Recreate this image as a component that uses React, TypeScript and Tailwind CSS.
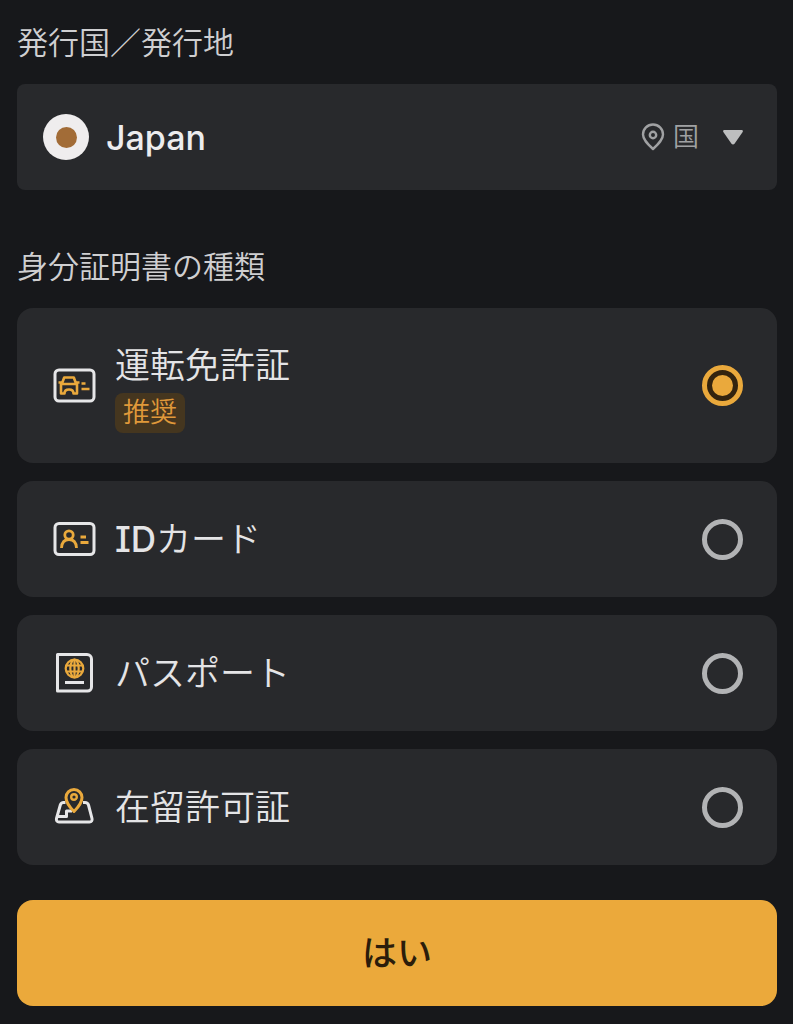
import { ReactNode, useState } from "react";
import clsx from "clsx";

const GOLD = "#eaa93c";
const LINE = "#e6e6e8";

function LicenseIcon() {
  return (
    <svg viewBox="0 0 44 44" fill="none" strokeWidth="3" className="size-11 shrink-0" aria-hidden="true">
      <rect x="2" y="6" width="39" height="31" rx="4" stroke={LINE} />
      <g stroke={GOLD} strokeWidth="2.6" strokeLinejoin="round">
        <path d="M9 19.5 11.200 13.500h9.600L23 19.500" />
        <path d="M8 20h16v9.500h-3.500c0-3-1.500-4-4.500-4s-4.500 1-4.500 4H8z" />
        <path d="M5.500 18.500H9M23 18.500h3.500" />
        <path d="M28.500 19.500h4M28.500 25h8" />
      </g>
    </svg>
  );
}

function IdCardIcon() {
  return (
    <svg viewBox="0 0 44 44" fill="none" strokeWidth="3" className="size-11 shrink-0" aria-hidden="true">
      <rect x="2" y="6.500" width="39" height="31" rx="4" stroke={LINE} />
      <g stroke={GOLD} strokeWidth="2.8">
        <circle cx="16" cy="18" r="4.200" />
        <path d="M8.500 31c.3-5.500 3.300-8.500 7.500-8.500s7.200 3 7.500 8.500" />
        <path d="M27.500 20h5.500M27.500 25.500h8" />
      </g>
    </svg>
  );
}

function PassportIcon() {
  return (
    <svg viewBox="0 0 44 44" fill="none" strokeWidth="3" className="size-11 shrink-0" aria-hidden="true">
      <path d="M4.500 3.500H34a4.500 4.500 0 0 1 4.500 4.500v28a4 4 0 0 1-4 4h-30z" stroke={LINE} strokeLinejoin="round" />
      <path d="M12 31.500h19" stroke={LINE} />
      <g stroke={GOLD} strokeWidth="2.200">
        <circle cx="21.500" cy="17.500" r="8.800" />
        <ellipse cx="21.500" cy="17.500" rx="4.200" ry="8.800" />
        <path d="M21.500 9v17M13.500 14.500h16M13.500 20.500h16" />
      </g>
    </svg>
  );
}

function ResidenceIcon() {
  return (
    <svg viewBox="0 0 44 44" fill="none" strokeWidth="3" className="size-11 shrink-0" aria-hidden="true">
      <g stroke={LINE} strokeLinejoin="round">
        <path d="M12.500 17.500H10.500c-2 0-2.700 1-3.200 2.500L3.500 33.500c-.5 2 .5 3.500 2.500 3.500h30.500c2 0 3-1.500 2.500-3.500L35.500 20c-.5-1.500-1.500-2.500-3.500-2.500h-2" />
        <path d="M4 31.500h9.500V26H19" />
      </g>
      <path d="M21 26.500c-4.500-4.500-8-9-8-14a8 8 0 0 1 16 0c0 5-3.500 9.500-8 14z" stroke={GOLD} strokeLinejoin="round" />
      <circle cx="21" cy="12" r="2.800" stroke={GOLD} strokeWidth="2.400" />
    </svg>
  );
}

function PinIcon() {
  return (
    <svg viewBox="0 0 24 28" fill="none" stroke="#a0a1a3" strokeWidth="2.400" className="h-7 w-6 shrink-0" aria-hidden="true">
      <path d="M12 26C6 20.500 2 16.500 2 11.500a10 10 0 0 1 20 0c0 5-4 9-10 14.500z" strokeLinejoin="round" />
      <circle cx="12" cy="12" r="3.200" />
    </svg>
  );
}

interface DocumentOption {
  id: string;
  label: ReactNode;
  icon: ReactNode;
  recommended?: boolean;
}

const documents: DocumentOption[] = [
  { id: "license", label: "運転免許証", icon: <LicenseIcon />, recommended: true },
  {
    id: "id-card",
    label: (
      <>
        <span className="font-medium [font-feature-settings:'cv08']">ID</span>カード
      </>
    ),
    icon: <IdCardIcon />,
  },
  { id: "passport", label: "パスポート", icon: <PassportIcon /> },
  { id: "residence", label: "在留許可証", icon: <ResidenceIcon /> },
];

interface DocumentCardProps {
  option: DocumentOption;
  checked: boolean;
  onSelect: (id: string) => void;
}

function DocumentCard({ option, checked, onSelect }: DocumentCardProps) {
  return (
    <label className="flex min-h-[116px] cursor-pointer items-center gap-[18px] rounded-2xl bg-[#28292c] py-[30px] pr-[34px] pl-9">
      {option.icon}
      <span className="flex flex-1 flex-col items-start">
        <span className="text-[35px] leading-[55px]">{option.label}</span>
        {option.recommended && (
          <span className="rounded-lg bg-[#45361f] px-2 text-[27px] leading-10 text-[#e0993a]">推奨</span>
        )}
      </span>
      <input
        type="radio"
        name="document"
        value={option.id}
        checked={checked}
        onChange={() => onSelect(option.id)}
        className={clsx(
          "grid size-[41px] shrink-0 appearance-none place-content-center rounded-full border-[5px]",
          checked
            ? "border-[#eaa93c] bg-[#33240f] before:size-[21px] before:rounded-full before:bg-[#eaa93c]"
            : "border-[#b2b3b5]"
        )}
      />
    </label>
  );
}

export default function App() {
  const [selected, setSelected] = useState("license");

  return (
    <main
      lang="ja"
      className="min-h-screen bg-[#17181b] pt-[23px] pr-4 pb-[18px] pl-[17px] font-['Inter','Noto_Sans_CJK_JP',sans-serif] font-[350] text-[#e4e4e6]"
    >
      <label htmlFor="country" className="block text-[31px] leading-10 text-[#cfcfd1]">
        発行国／発行地
      </label>

      <div className="mt-[21px] flex h-[106px] items-center rounded-lg bg-[#28292c] pr-[34px] pl-[26px]">
        <span className="grid size-[46px] shrink-0 place-content-center rounded-full bg-[#efedee]">
          <span className="size-[21px] rounded-full bg-[#a26c37]" />
        </span>
        <select
          id="country"
          className="ml-[17px] h-full min-w-0 flex-1 appearance-none bg-transparent text-[34px] font-medium text-[#ececee] outline-none"
        >
          <option>Japan</option>
        </select>
        <PinIcon />
        <span className="ml-2 text-[26px] leading-10 text-[#a0a1a3]">国</span>
        <svg viewBox="0 0 20 15" fill="#bdbebf" className="ml-6 h-[15px] w-5 shrink-0" aria-hidden="true">
          <path d="M1.500 0h17c1.300 0 1.800 1.200 1 2.200l-8 11.500c-.8 1.100-2.200 1.100-3 0L.5 2.200C-.3 1.200.2 0 1.500 0z" />
        </svg>
      </div>

      <fieldset className="mt-[57px]">
        <legend className="text-[31px] leading-10 text-[#cfcfd1]">身分証明書の種類</legend>
        <div className="mt-[21px] flex flex-col gap-[18px]">
          {documents.map((option) => (
            <DocumentCard
              key={option.id}
              option={option}
              checked={selected === option.id}
              onSelect={setSelected}
            />
          ))}
        </div>
      </fieldset>

      <button
        type="button"
        className="mt-[35px] h-[106px] w-full rounded-2xl bg-[#eba93b] text-[35px] font-medium text-[#2b1d0b]"
      >
        はい
      </button>
    </main>
  );
}
